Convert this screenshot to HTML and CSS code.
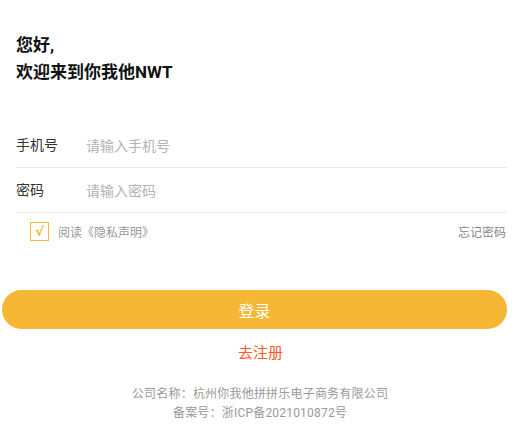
FILE: index.html
```html
<!DOCTYPE html>
<html lang="zh">
<head>
<meta charset="utf-8">
<link rel="stylesheet" href="styles.css">
</head>
<body>
<div class="page">
  <div class="greeting">
    <div>您好,</div>
    <div>欢迎来到你我他NWT</div>
  </div>
  <div class="form">
    <div class="row">
      <span class="label">手机号</span>
      <span class="placeholder">请输入手机号</span>
    </div>
    <div class="row">
      <span class="label">密码</span>
      <span class="placeholder">请输入密码</span>
    </div>
    <div class="options">
      <div class="agree">
        <span class="checkbox">√</span>
        <span class="agree-text">阅读《隐私声明》</span>
      </div>
      <span class="forgot">忘记密码</span>
    </div>
  </div>
  <div class="actions">
    <div class="login-btn">登录</div>
  </div>
  <div class="register">去注册</div>
  <div class="footer">
    <div>公司名称：杭州你我他拼拼乐电子商务有限公司</div>
    <div>备案号：浙ICP备2021010872号</div>
  </div>
</div>
</body>
</html>
```
FILE: styles.css
```css
html, body {
  margin: 0;
  padding: 0;
  background: #ffffff;
}
body {
  font-family: Roboto, "Noto Sans CJK SC", sans-serif;
  color: #333333;
}
.page {
  width: 517px;
  height: 433px;
  overflow: hidden;
}
.greeting {
  padding: 32px 10px 0 16px;
  font-size: 17px;
  line-height: 27px;
  font-weight: bold;
  color: #111111;
}
.form {
  margin-top: 37px;
  padding: 0 10px 0 16px;
}
.row {
  display: flex;
  align-items: center;
  height: 44px;
  border-bottom: 1px solid #e8e8e8;
}
.label {
  width: 70px;
  font-size: 14px;
  color: #333333;
  position: relative;
  top: -1px;
}
.placeholder {
  font-size: 14px;
  color: #b3b3b3;
}
.options {
  display: flex;
  align-items: center;
  justify-content: space-between;
  height: 36px;
}
.agree {
  display: flex;
  align-items: center;
  padding-left: 14px;
}
.checkbox {
  width: 17px;
  height: 17px;
  border: 1px solid #f6b734;
  color: #f6b734;
  font-family: "DejaVu Sans", sans-serif;
  font-size: 13px;
  font-weight: bold;
  line-height: 17px;
  text-align: center;
  margin-right: 9px;
}
.agree-text {
  font-size: 12px;
  color: #999999;
}
.forgot {
  font-size: 12px;
  color: #888888;
  margin-right: 1px;
}
.actions {
  padding: 41px 10px 0 2px;
  display: flex;
}
.login-btn {
  flex: 1;
  height: 39px;
  border-radius: 20px;
  background: #f6b734;
  color: #ffffff;
  font-size: 16px;
  display: flex;
  align-items: center;
  justify-content: center;
}
.register {
  margin-top: 13px;
  padding-left: 4px;
  text-align: center;
  font-size: 15px;
  line-height: 22px;
  color: #ff5a26;
}
.footer {
  margin-top: 21px;
  padding-left: 3px;
  text-align: center;
  font-size: 12px;
  line-height: 19px;
  letter-spacing: 0.2px;
  color: #999999;
}
```
